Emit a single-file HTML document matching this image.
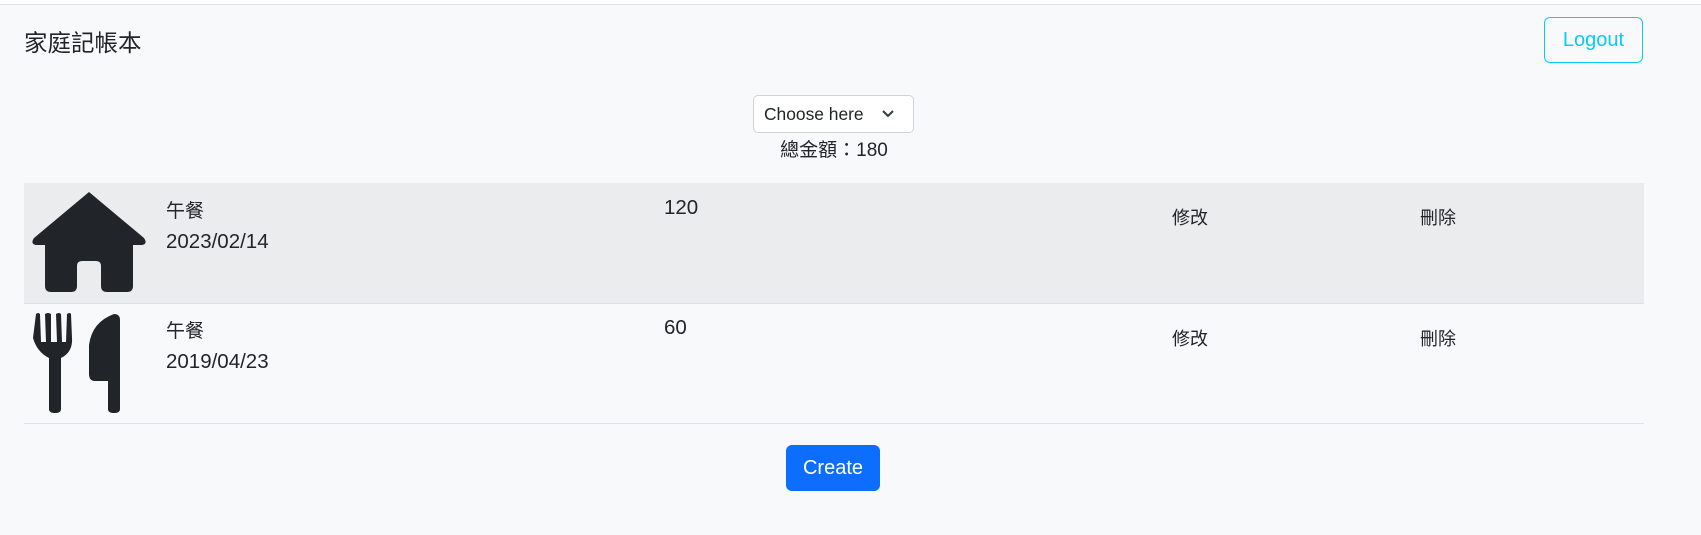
<!DOCTYPE html>
<html><head><meta charset="utf-8"><style>
*{margin:0;padding:0;box-sizing:border-box}
body{width:1701px;height:535px;background:#f8f9fa;font-family:"Liberation Sans","Noto Sans CJK TC",sans-serif;color:#212529;position:relative;overflow:hidden;font-size:17.4px}
.a{position:absolute;white-space:nowrap}
</style></head><body>
<div class="a" style="left:0;top:0;width:1701px;height:5px;background:#fff;border-bottom:1px solid #dee2e6"></div>
<div class="a" style="left:24px;top:24px;font-size:23.5px">家庭記帳本</div>
<div class="a" style="left:1544px;top:17px;width:99px;height:46px;border:1px solid #0dcaf0;border-radius:6px;color:#0dcaf0;font-size:20px;text-align:center;line-height:44px">Logout</div>
<div class="a" style="left:753px;top:95px;width:161px;height:38px;border:1px solid #ced4da;border-radius:5px;background:#fff;padding-left:10px;line-height:36px;font-size:17.4px">Choose here
<svg style="position:absolute;left:127px;top:13px" width="14" height="10" viewBox="0 0 14 10"><path d="M2 2l5 5 5-5" fill="none" stroke="#343a40" stroke-width="2"/></svg></div>
<div class="a" style="left:0;width:1668px;text-align:center;top:135px;font-size:19px">總金額：180</div>
<div class="a" style="left:24px;top:183px;width:1620px;height:121px;background:#ebeced;border-bottom:1px solid #dee2e6"></div>
<div class="a" style="left:24px;top:304px;width:1620px;height:120px;border-bottom:1px solid #dee2e6"></div>
<svg class="a" style="left:0;top:0" width="200" height="430">
<path d="M89 192 L144 238 Q148 244 142 245 L133 245 L133 286 Q133 292 127 292 L107 292 Q101 292 101 286 L101 266 Q101 261 96 261 L82 261 Q77 261 77 266 L77 286 Q77 292 71 292 L51 292 Q45 292 45 286 L45 245 L36 245 Q30 244 34 238 Z" fill="#212529"/>
<path d="M36 314 Q38 312 40 314 L41 342 L46 342 L45 314 Q48 312 51 314 L51 342 L57 342 L56 314 Q59 312 61 314 L62 342 L66 342 L67 314 Q70 312 71 314 L72 338 Q73 352 61 358 L61 409 Q61 413 55 413 Q49 413 49 409 L49 358 Q37 352 33 338 Z" fill="#212529"/>
<path d="M114 314 Q120 314 120 320 L120 409 Q120 413 114 413 Q108 413 108 409 L108 381 L95 381 Q89 381 89 374 L89 345 Q92 322 114 314 Z" fill="#212529"/>
</svg>
<div class="a" style="left:166px;top:196px;font-size:19px">午餐</div>
<div class="a" style="left:166px;top:230px;font-size:20.5px">2023/02/14</div>
<div class="a" style="left:664px;top:196px;font-size:20.5px">120</div>
<div class="a" style="left:1172px;top:204px;font-size:18px">修改</div>
<div class="a" style="left:1420px;top:204px;font-size:18px">刪除</div>
<div class="a" style="left:166px;top:316px;font-size:19px">午餐</div>
<div class="a" style="left:166px;top:350px;font-size:20.5px">2019/04/23</div>
<div class="a" style="left:664px;top:316px;font-size:20.5px">60</div>
<div class="a" style="left:1172px;top:325px;font-size:18px">修改</div>
<div class="a" style="left:1420px;top:325px;font-size:18px">刪除</div>
<div class="a" style="left:786px;top:445px;width:94px;height:46px;background:#0d6efd;border-radius:6px;color:#fff;font-size:20px;text-align:center;line-height:46px">Create</div>
</body></html>
